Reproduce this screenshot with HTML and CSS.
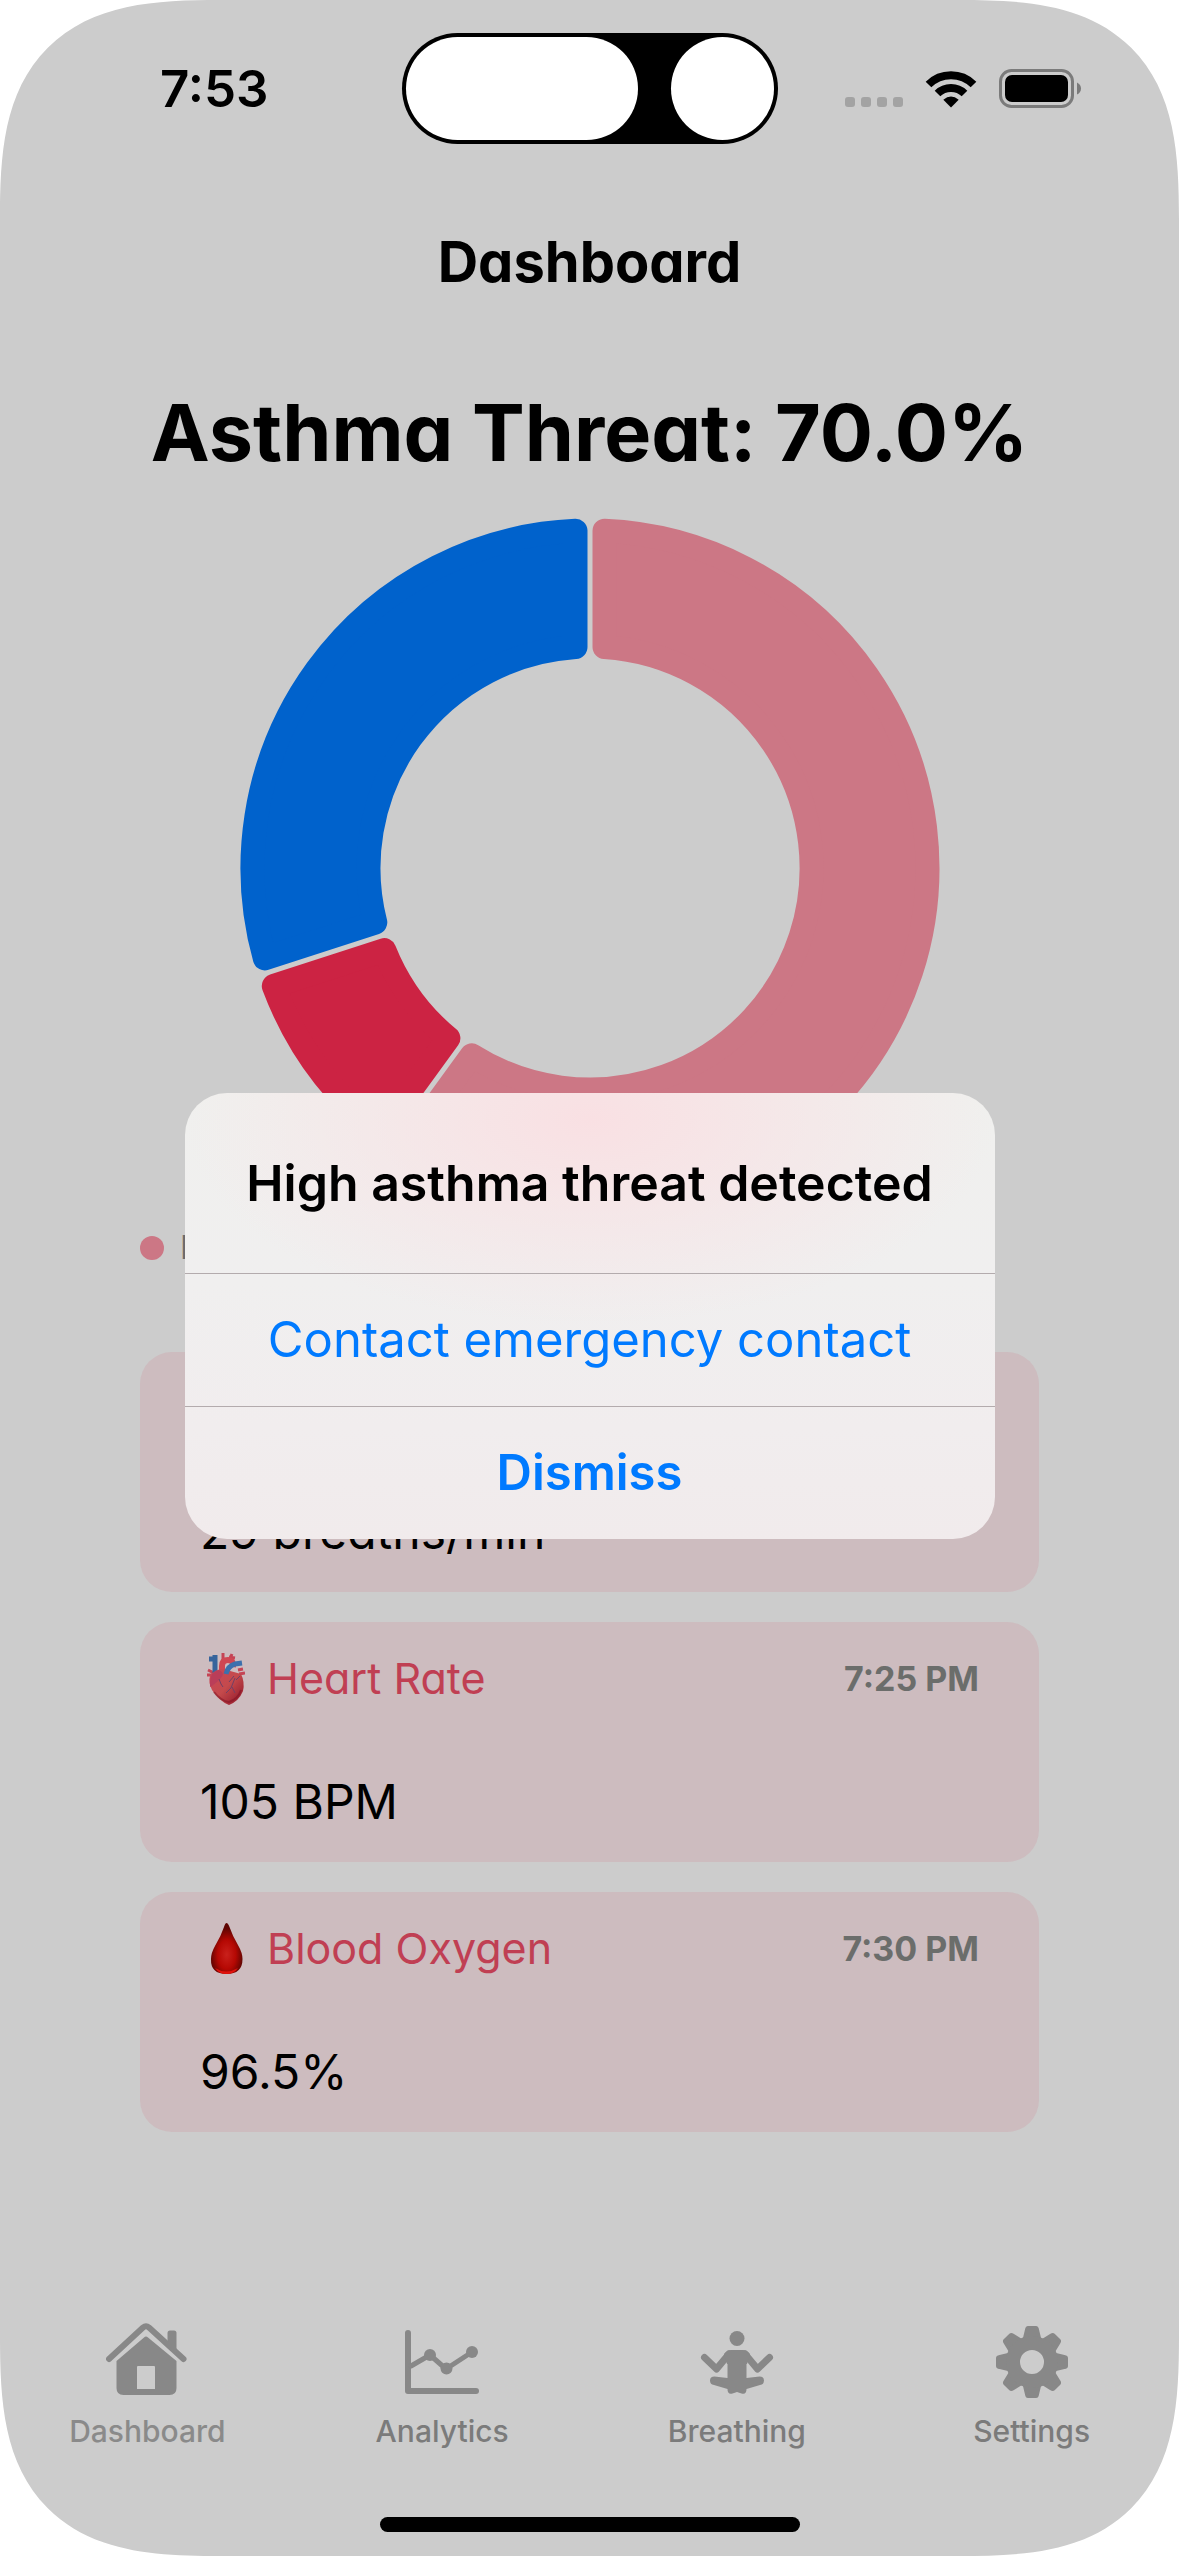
FILE: index.html
```html
<!DOCTYPE html>
<html lang="en">
<head>
<meta charset="utf-8">
<meta name="viewport" content="width=device-width, initial-scale=1">
<title>Dashboard</title>
<link rel="stylesheet" href="styles.css">
</head>
<body>
<div class="screen">
  <header class="status">
    <time class="clock">7:53</time>
    <div class="island"><span class="pill"></span><span class="camera"></span></div>
    <div class="indicators">
      <span class="signal"><i></i><i></i><i></i><i></i></span>
      <svg class="wifi" viewBox="0 0 52 38" width="52" height="38" aria-hidden="true">
        <g fill="none" stroke="#000" stroke-width="8">
          <path d="M3.500 14.500A32 32 0 0 1 48.500 14.500"/>
          <path d="M12.500 23.500A19.300 19.300 0 0 1 39.500 23.500"/>
        </g>
        <path d="M26 37.500L18.300 29.800Q26 23.200 33.700 29.800Z"/>
      </svg>
      <svg class="battery" viewBox="0 0 84 40" width="84" height="40" aria-hidden="true">
        <rect x="1.500" y="1.500" width="72" height="36" rx="11" fill="none" stroke="#7b7b7b" stroke-width="3"/>
        <rect x="6" y="6" width="63" height="27" rx="7"/>
        <path d="M78 13.500q4 2 4 6t-4 6z" fill="#7b7b7b"/>
      </svg>
    </div>
  </header>

  <main class="content">
    <h1 class="title">Dashboard</h1>
    <h2 class="threat">Asthma Threat: 70.0%</h2>
    <svg class="donut" viewBox="0 0 700 700" role="img" aria-label="Asthma threat breakdown">
      <g stroke-width="24" stroke-linejoin="round">
        <path fill="#cc7785" stroke="#cc7785" d="M364.500 12.800A337.500 337.500 0 1 1 163.500 631.300L231.800 537.300A221.500 221.500 0 1 0 364.500 129Z"/>
        <path fill="#cc2343" stroke="#cc2343" d="M140.100 614.300A337.500 337.500 0 0 1 33.800 468L144.300 432.100A221.500 221.500 0 0 0 208.400 520.300Z"/>
        <path fill="#0062cc" stroke="#0062cc" d="M24.800 440.400A337.500 337.500 0 0 1 335.500 12.800V129A221.500 221.500 0 0 0 135.300 404.500Z"/>
      </g>
    </svg>
    <p class="legend"><span class="dot"></span>Respiratory Rate</p>

    <section class="cards">
      <article class="card">
        <div class="card-head"><h3>Respiratory Rate</h3><time>7:20 PM</time></div>
        <p class="value">29 breaths/min</p>
      </article>
      <article class="card">
        <div class="card-head">
          <svg class="emoji" viewBox="0 0 38 54" width="38" height="54" aria-hidden="true">
            <defs><linearGradient id="heart" x1="0" y1="0" x2="1" y2="1"><stop offset="0" stop-color="#c9465a"/><stop offset=".5" stop-color="#c44a4c"/><stop offset="1" stop-color="#8d1226"/></linearGradient></defs>
            <path d="M1 19l6 3M0 24h6M32 23l6-1M31 19l5-1M16 2v7M25 3l-3 7M22 6l6 1" stroke="#c54455" stroke-width="3" fill="none"/>
            <path d="M2 8h6M8 4v18" stroke="#37649c" stroke-width="5" fill="none"/>
            <path d="M15 22V15q0-6 6-6t5 7" stroke="#d04753" stroke-width="6" fill="none"/>
            <path d="M3 25q5-7 13-7l18 5q4 8 2 17-4 10-14 14Q12 50 5 39Q1 31 3 25Z" fill="url(#heart)"/>
            <path d="M3 31q1-11 9-12 7 3 1 9T3 36Z" fill="#ba3e59"/>
            <path d="M19 23q2-8 9-10l7-1" stroke="#3c70ad" stroke-width="5" fill="none"/>
            <path d="M12 28q2 6 4 8M27 25l-5 6M28 27l-4 10-5 5M25 36l3 6M33 25l-4 4" stroke="#704066" stroke-width="1" fill="none"/>
            <path d="M7 41q7 9 15 10 9-3 12-12" stroke="#7b0d20" stroke-width="2" fill="none" opacity=".5"/>
          </svg>
          <h3>Heart Rate</h3><time>7:25 PM</time>
        </div>
        <p class="value">105 BPM</p>
      </article>
      <article class="card">
        <div class="card-head">
          <svg class="emoji" viewBox="0 0 38 54" width="38" height="54" aria-hidden="true">
            <defs><radialGradient id="drop" cx=".5" cy=".62" r=".52"><stop offset="0" stop-color="#c9211c"/><stop offset=".55" stop-color="#b50803"/><stop offset="1" stop-color="#5f0502"/></radialGradient></defs>
            <path d="M19.500 2q1.500 0 3 4 3 9 9 19 4 7 4 13 0 15-16 15T4 38q0-6 4-13 6-10 9-19 1.200-4 2.500-4Z" fill="url(#drop)"/>
            <path d="M8 47q11 7 23 0-4 6-11.500 6T8 47Z" fill="#e0120c"/>
          </svg>
          <h3>Blood Oxygen</h3><time>7:30 PM</time>
        </div>
        <p class="value">96.5%</p>
      </article>
    </section>
  </main>

  <nav class="tabs">
    <a class="tab current" href="#dashboard">
      <svg viewBox="1 0 82 76" width="82" height="76" aria-hidden="true">
        <path d="M4 36L38 4.500q3-2.500 6 0L78.500 36" fill="none" stroke="#888" stroke-width="6" stroke-linecap="round"/>
        <path d="M62.500 22V10q0-2.500 2.500-2.500h4q2.500 0 2.500 2.500v20Z" fill="#888"/>
        <path fill="#888" fill-rule="evenodd" d="M39 14.500q2-2 4 0L71.500 38v27q0 7-7 7h-46q-7 0-7-7V38ZM33 43q-1 0-1 1v22h18V44q0-1-1-1Z"/>
      </svg>
      Dashboard
    </a>
    <a class="tab" href="#analytics">
      <svg viewBox="0 0 82 76" width="82" height="76" aria-hidden="true">
        <g fill="none" stroke="#888" stroke-width="6" stroke-linecap="round" stroke-linejoin="round"><path d="M7 10v58h68"/><path d="M10 43l19-11 16 14 26-17" stroke-width="5"/></g>
        <g fill="#888"><circle cx="29" cy="32" r="6"/><circle cx="45.500" cy="45.500" r="6"/><circle cx="71" cy="29" r="6"/></g>
      </svg>
      Analytics
    </a>
    <a class="tab" href="#breathing">
      <svg viewBox="0 0 82 76" width="82" height="76" aria-hidden="true">
        <circle cx="41" cy="15.500" r="7.500" fill="#888"/>
        <path d="M8.500 34.500L20.500 46 33 31M73.500 34.500L61.500 46 49 31" fill="none" stroke="#888" stroke-width="7" stroke-linecap="round" stroke-linejoin="round"/>
        <path fill="#888" d="M35 27h12q4 0 7 4l-3 10h-.5v14l13-1.500q4.500 0 4.500 4t-4 4.500L50.500 66q0 6-5 4.500L41 69l-4.500 1.500q-5 1.500-5-4.500L18 62q-4-.5-4-4.500t4.500-4L31.500 55V41H31l-3-10q3-4 7-4Z"/>
      </svg>
      Breathing
    </a>
    <a class="tab" href="#settings">
      <svg viewBox="0 0 82 76" width="82" height="76" aria-hidden="true">
        <g fill="#888">
          <g id="teeth">
            <path id="tooth" d="M31.500 17L34 6.500Q34.500 3 37 3h8q2.500 0 3 3.500L50.500 17Z"/>
            <use href="#tooth" transform="rotate(45 41 39)"/><use href="#tooth" transform="rotate(90 41 39)"/><use href="#tooth" transform="rotate(135 41 39)"/>
          </g>
          <use href="#teeth" transform="rotate(180 41 39)"/>
        </g>
        <circle cx="41" cy="39" r="19" fill="none" stroke="#888" stroke-width="14"/>
      </svg>
      Settings
    </a>
  </nav>
  <div class="home-bar"></div>

  <div class="overlay">
    <div class="alert" role="alertdialog" aria-labelledby="alert-title">
      <h2 id="alert-title">High asthma threat detected</h2>
      <button type="button">Contact emergency contact</button>
      <button type="button" class="dismiss">Dismiss</button>
    </div>
  </div>
</div>
</body>
</html>
```
FILE: styles.css
```css
* { box-sizing: border-box; }

body {
  margin: 0;
  background: #fff;
  font-family: Inter, "Liberation Sans", sans-serif;
  color: #000;
}

h1, h2, h3, p { margin: 0; }

.screen {
  position: relative;
  display: flex;
  flex-direction: column;
  min-height: 100vh;
  overflow: hidden;
  border-radius: 168px;
  background: #ccc;
}

/* Continuous-curvature corners where the browser can draw them */
@supports (corner-shape: superellipse(1.5)) {
  .screen {
    border-radius: 220px;
    corner-shape: superellipse(1.5);
  }
}

.status {
  display: grid;
  grid-template-columns: 1fr 376px 1fr;
  align-items: center;
  padding: 33px 96px 0;
}

.clock {
  padding-left: 64px;
  font-size: 51px;
  font-weight: 600;
  line-height: 64px;
}

.island {
  display: flex;
  justify-content: space-between;
  padding: 4px;
  border-radius: 56px;
  background: #000;
}

.pill,
.camera {
  height: 103px;
  border-radius: 52px;
  background: #fff;
}

.pill { width: 232px; }
.camera { width: 103px; }

.indicators {
  display: flex;
  align-items: flex-end;
  justify-content: flex-end;
  gap: 22px;
}

.signal {
  display: flex;
  gap: 6px;
  margin-bottom: 2px;
}

.wifi { margin-bottom: 1px; }

.signal i {
  width: 10px;
  height: 10px;
  border-radius: 3px;
  background: #a3a3a3;
}

.content {
  display: flex;
  flex-direction: column;
  flex: 1;
  padding: 82px 140px 0;
  font-feature-settings: "cv11";
}

.title {
  font-size: 56px;
  font-weight: 700;
  line-height: 72px;
  text-align: center;
}

.threat {
  margin: 84px -60px 0;
  font-size: 79px;
  font-weight: 700;
  line-height: 100px;
  text-align: center;
}

.donut {
  align-self: center;
  width: 100%;
  max-width: 700px;
  margin-top: 36px;
}

.legend {
  display: flex;
  align-items: center;
  gap: 16px;
  margin-top: 10px;
  font-size: 32px;
  line-height: 40px;
  color: #6b6b6d;
}

.dot {
  width: 24px;
  height: 24px;
  border-radius: 50%;
  background: #cc7785;
}

.cards {
  display: grid;
  gap: 30px;
  margin-top: 84px;
}

.card {
  display: flex;
  flex-direction: column;
  justify-content: space-between;
  min-height: 240px;
  padding: 24px 60px 28px;
  border-radius: 32px;
  background: #cdbcbf;
}

.card-head {
  display: flex;
  align-items: center;
  min-height: 64px;
}

.card-head h3 {
  font-size: 43px;
  font-weight: 400;
  line-height: 64px;
  color: #c03f53;
}

.card-head time {
  margin-left: auto;
  font-size: 34px;
  font-weight: 700;
  color: #6b6d6b;
}

.emoji { margin: 0 22px 0 7px; }

.value {
  font-size: 48px;
  line-height: 64px;
}

.tabs {
  display: grid;
  grid-template-columns: repeat(4, 1fr);
}

.tab {
  display: flex;
  flex-direction: column;
  align-items: center;
  gap: 12px;
  font-size: 30px;
  font-weight: 500;
  line-height: 40px;
  color: #7b7b7b;
  text-decoration: none;
}

.tab.current { color: #8a8a8a; }

.home-bar {
  align-self: center;
  width: 420px;
  height: 15px;
  margin: 66px 0 24px;
  border-radius: 8px;
  background: #000;
}

.overlay {
  position: absolute;
  inset: 0;
  display: grid;
  place-items: center;
  padding: 76px 40px 0;
}

.alert {
  width: 100%;
  max-width: 810px;
  overflow: hidden;
  border-radius: 42px;
  background:
    radial-gradient(ellipse 50% 46% at 50% 6%, #f9e0e3 0%, rgba(249, 224, 227, 0) 100%),
    linear-gradient(#f0f0ee 0%, #f0efef 42%, #f1edee 75%, #f1ebec 100%);
}

.alert h2 {
  padding: 58px 20px;
  font-size: 50px;
  font-weight: 600;
  line-height: 64px;
  text-align: center;
}

.alert button {
  display: block;
  width: 100%;
  padding: 34px 20px;
  border: 0;
  border-top: 1px solid #b3abad;
  background: none;
  font-family: inherit;
  font-size: 49px;
  line-height: 64px;
  color: #007aff;
}

.alert .dismiss { font-weight: 600; }
```
